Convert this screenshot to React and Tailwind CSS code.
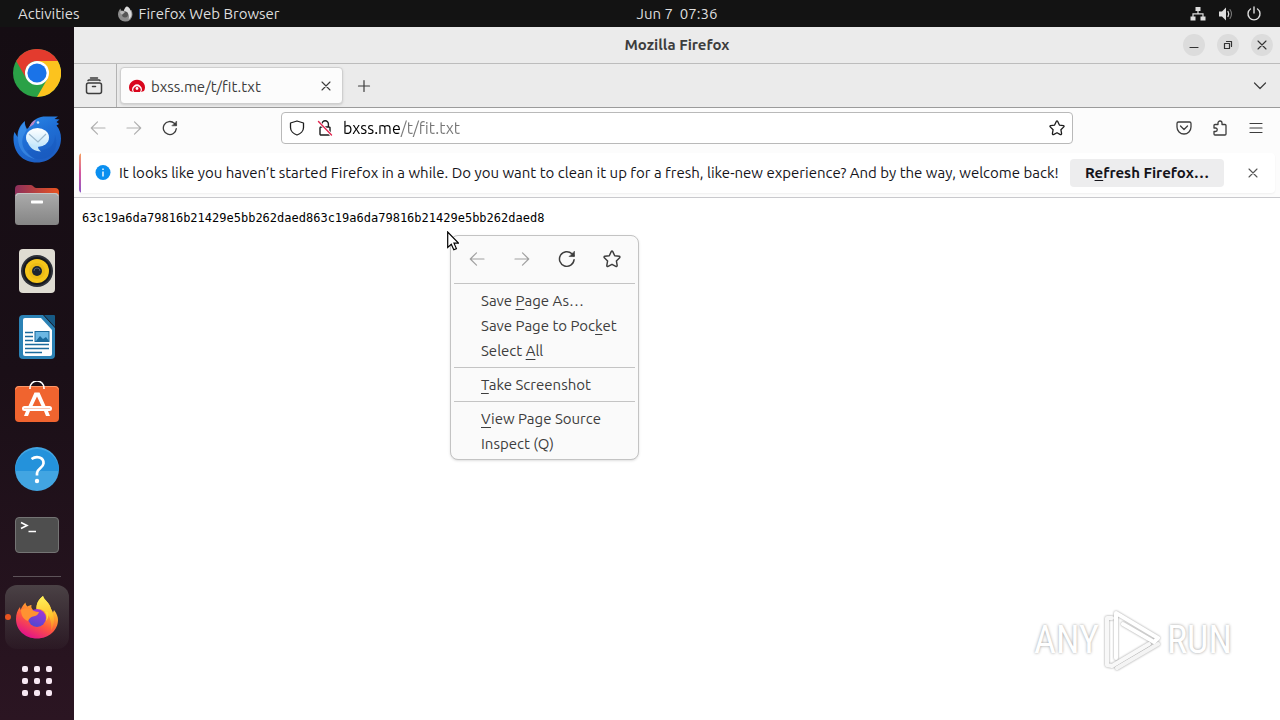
import React from "react";

const stroke = {
  fill: "none",
  stroke: "currentColor",
  strokeLinecap: "round",
  strokeLinejoin: "round",
};

function Icon({ children, className = "size-4", viewBox = "0 0 16 16", width = 1.2 }) {
  return (
    <svg viewBox={viewBox} className={className} {...stroke} strokeWidth={width} aria-hidden="true">
      {children}
    </svg>
  );
}

const BackIcon = () => (
  <Icon><path d="M15 8H1.5M7.5 1.8 1.3 8l6.2 6.2" /></Icon>
);
const ForwardIcon = () => (
  <Icon><path d="M1 8h13.5M8.5 1.8 14.7 8l-6.2 6.2" /></Icon>
);
const ReloadIcon = ({ className }) => (
  <Icon className={className} width={1.3}>
    <path d="M14.3 8.6A6.5 6.5 0 1 1 12.4 3.4L14 5" />
    <path d="M14.6 1.4v4.4h-4.4z" fill="currentColor" strokeWidth="0.6" />
  </Icon>
);
const StarIcon = ({ className }) => (
  <Icon className={className} width={1.3}>
    <path d="M8 .9c.3 0 .5.2.7.5l1.7 3.7 4 .5c.7.1.9.8.4 1.3l-2.9 2.8.7 4c.1.7-.6 1.2-1.2.9L8 12.7l-3.5 1.9c-.6.3-1.2-.2-1.1-.9l.7-4L1.2 6.9c-.5-.5-.2-1.2.4-1.3l4-.5 1.7-3.7c.2-.3.4-.5.7-.5z" />
  </Icon>
);
const CloseIcon = ({ className = "size-3" }) => (
  <Icon className={className} viewBox="0 0 12 12" width={1.1}>
    <path d="m2 2 8 8M10 2l-8 8" />
  </Icon>
);

function ChromeLogo() {
  return (
    <svg viewBox="0 0 48 48" className="size-12" aria-hidden="true">
      <circle cx="24" cy="24" r="24" fill="#2aa147" />
      <path d="M24 12h20.800A24 24 0 0 1 24 48l10.400-18z" fill="#fcc31e" />
      <path d="M3.200 12A24 24 0 0 1 44.800 12H24A12 12 0 0 0 13.600 30z" fill="#e33b2e" />
      <circle cx="24" cy="24" r="12" fill="#fff" />
      <circle cx="24" cy="24" r="9.600" fill="#1a73e8" />
    </svg>
  );
}

function ThunderbirdLogo() {
  return (
    <svg viewBox="0 0 48 48" className="size-12" aria-hidden="true">
      <defs>
        <linearGradient id="tb-body" x1="0" y1="0" x2="0.500" y2="1">
          <stop offset="0" stopColor="#2c8ceb" />
          <stop offset="0.500" stopColor="#1f6fd6" />
          <stop offset="1" stopColor="#1d5fc4" />
        </linearGradient>
        <linearGradient id="tb-mail" x1="0" y1="0" x2="0" y2="1">
          <stop offset="0" stopColor="#ffffff" />
          <stop offset="1" stopColor="#c3e6fb" />
        </linearGradient>
      </defs>
      <path d="M17 11C20 4 26 1.500 33 1.500h12l-3.500 2.500 5 .5-3 2.500 2.500 2-2.500 1.500c3 3.500 4.500 8 4.500 13C48 37 37 47.500 24 47.500 10 47.500 0 38 .5 22c.2-2 .5-4 1-5l3 5c0-7 2.500-12 7.500-16-.5 3 .5 5 2 8z" fill="url(#tb-body)" />
      <path d="M11.500 7C7 12 5 16 5 23c0 11 7 19 17 21C13 39 8 32 9.500 24c.5-4 3-6 4-9-.5-3-2.500-4-2-8z" fill="#4a9bf0" opacity=".5" />
      <path d="M27 35c10 0 15-6 15-15 4 11-1 23-14 24-6 1-12-3-14-9z" fill="#1553b6" opacity=".35" />
      <ellipse cx="24.500" cy="22.500" rx="11.500" ry="9.500" fill="url(#tb-mail)" />
      <path d="M15 28c2 5 6 8 13 8.500-2-1.500-3-3-3-5z" fill="#c3e6fb" />
      <path d="m16 19 9 8 8-8" fill="none" stroke="#9db9cd" strokeWidth="1.200" />
      <circle cx="25" cy="7.500" r="1.300" fill="#cfe4fb" />
      <path d="M16 12.500c1.500-4 4-7 7-7.500l-2.500 4.500z" fill="#bd87c8" />
    </svg>
  );
}

function FilesLogo() {
  return (
    <svg viewBox="0 0 44 40" className="h-10 w-11" aria-hidden="true">
      <defs>
        <linearGradient id="fi-back"><stop stopColor="#8c2f5c" /><stop offset="1" stopColor="#e95420" /></linearGradient>
        <linearGradient id="fi-front" x1="0" y1="0" x2="0" y2="1"><stop stopColor="#ababab" /><stop offset="1" stopColor="#858585" /></linearGradient>
      </defs>
      <path d="M0 4a4 4 0 0 1 4-4h12c2 0 3 3 5 3h19a4 4 0 0 1 4 4v10H0z" fill="url(#fi-back)" />
      <rect y="8" width="44" height="32" rx="3.500" fill="url(#fi-front)" />
      <path d="M1 11a3 3 0 0 1 3-2.500h36a3 3 0 0 1 3 2.500" fill="none" stroke="#c6c6c6" strokeWidth="1" />
      <rect x="16" y="15.500" width="12" height="3" rx=".7" fill="#fff" />
    </svg>
  );
}

function RhythmboxLogo() {
  return (
    <svg viewBox="0 0 36 44" className="h-11 w-9" aria-hidden="true">
      <rect width="36" height="44" rx="4" fill="#dfdcd2" />
      <circle cx="18" cy="22" r="16" fill="#2d3038" />
      <circle cx="18" cy="22" r="14" fill="#17181c" />
      <circle cx="18" cy="22" r="12" fill="#f6c51a" />
      <circle cx="18" cy="22" r="8" fill="#d9a90f" opacity=".35" />
      <circle cx="18" cy="22" r="5" fill="#1d2531" />
      <path d="M15 22a3 3 0 0 1 6 0" stroke="#52606e" fill="none" />
    </svg>
  );
}

function WriterLogo() {
  return (
    <svg viewBox="0 0 36 44" className="h-11 w-9" aria-hidden="true">
      <path d="M4 0h20l12 13v27a4 4 0 0 1-4 4H4a4 4 0 0 1-4-4V4a4 4 0 0 1 4-4z" fill="#2b82b5" />
      <path d="M25 0h10a1 1 0 0 1 1 1v11z" fill="#175a85" />
      <path d="M6 3h16l11 12v24a2 2 0 0 1-2 2H6a2 2 0 0 1-2-2V5a2 2 0 0 1 2-2z" fill="#fff" />
      <path d="M6 17.500h8M6 21.500h8M6 25.500h8M6 29.500h24M6 33.500h24M6 37.500h17" stroke="#1b6b9d" strokeWidth="1.700" />
      <rect x="16" y="16.500" width="14" height="10" fill="#6bb7e3" stroke="#1b6b9d" />
      <path d="m17 26 4-5 3 3 3-2 3 4z" fill="#1b6b9d" />
    </svg>
  );
}

function SoftwareLogo() {
  return (
    <svg viewBox="0 0 44 44" className="size-11" aria-hidden="true">
      <rect y="5" width="44" height="36" rx="4" fill="#f0642f" />
      <path d="M.5 8.500A3.500 3.500 0 0 1 4 5.500h36a3.500 3.500 0 0 1 3.500 3" fill="none" stroke="#fb9869" />
      <path d="M15 8V7a7 7 0 0 1 14 0v1" fill="none" stroke="#fff" strokeWidth="1.600" />
      <path d="M19.500 11.500h5l6 13.500h4a1.500 1.500 0 0 1 0 5H33l2 5h-4l-2-5H15l-2 5H9l2-5h-1.500a1.500 1.500 0 0 1 0-5h4zm2.500 4L17.500 25h9z" fill="#fff" />
      <path d="M9 27.500h26" stroke="#f9c8b4" />
    </svg>
  );
}

function HelpLogo() {
  return (
    <svg viewBox="0 0 44 44" className="size-11" aria-hidden="true">
      <circle cx="22" cy="22" r="22" fill="#42a5e2" />
      <path d="M0 24a22 22 0 1 1 44 0z" fill="#2492db" />
      <path d="M16.500 12c5-3.500 12.500-2 12 4.500-.3 4.500-6.500 5-6.500 9.500v2.500" fill="none" stroke="#fff" strokeWidth="2.700" />
      <circle cx="22" cy="34" r="2.200" fill="#fff" />
    </svg>
  );
}

function TerminalLogo() {
  return (
    <svg viewBox="0 0 44 36" className="h-9 w-11" aria-hidden="true">
      <rect x=".5" y=".5" width="43" height="35" rx="3.500" fill="#4e4e4e" stroke="#747474" />
      <path d="m6 5.500 6 3-6 3M13.500 14.500h7.500" fill="none" stroke="#fff" strokeWidth="1.600" />
    </svg>
  );
}

function FirefoxLogo() {
  return (
    <svg viewBox="0 0 44 44" className="size-11" aria-hidden="true">
      <defs>
        <linearGradient id="fx-outer" x1=".8" y1=".1" x2=".35" y2=".98">
          <stop stopColor="#fff44f" />
          <stop offset=".3" stopColor="#ffa52c" />
          <stop offset=".6" stopColor="#ff5a3c" />
          <stop offset="1" stopColor="#e31587" />
        </linearGradient>
        <linearGradient id="fx-flame" x1=".4" y1="0" x2=".5" y2="1">
          <stop stopColor="#fff15a" /><stop offset=".6" stopColor="#ffc42c" /><stop offset="1" stopColor="#ff7a2c" />
        </linearGradient>
        <linearGradient id="fx-globe" x1=".7" y1="0" x2=".3" y2="1">
          <stop stopColor="#a634d8" /><stop offset="1" stopColor="#4b49cf" />
        </linearGradient>
      </defs>
      <path d="M28 1c1 4 7 7 8 13 1 1 1.500 2 1.800 4l1.200-3c3 4 4 7 4 10 0 10-9 18.500-21 18.500S1 35 1 24c0-5 1.500-9 4-12l.5 3C7 12 8.500 9 10.500 7.500c0 2 1 3 2 4 2-1 3-1.500 4-1.500-.5 2 0 3.500 1.500 5h3.500C21 8 24 4 28 1z" fill="url(#fx-outer)" />
      <path d="M28 1c1 4 7 7 8 13 4 7 4 15 0 22 1-9-1-16-7-20-2-2-5-2-7.500-1C21 8 24 4 28 1z" fill="url(#fx-flame)" />
      <circle cx="22" cy="23" r="9" fill="url(#fx-globe)" />
      <path d="M6 15c3-2 6-2 9-1 3 1 5 3 9 3-1 3-3 4-6 4.500-2 .5-4 2-5 4.500-5-2-7-6-7-11z" fill="#ff9232" />
      <path d="M30 17c2 3 2 6 1 9 2-2 3-5 2-9z" fill="#ffd83b" />
    </svg>
  );
}

const dockApps = [
  ["Google Chrome", ChromeLogo],
  ["Thunderbird Mail", ThunderbirdLogo],
  ["Files", FilesLogo],
  ["Rhythmbox", RhythmboxLogo],
  ["LibreOffice Writer", WriterLogo],
  ["Ubuntu Software", SoftwareLogo],
  ["Help", HelpLogo],
  ["Terminal", TerminalLogo],
];

function TopBar() {
  return (
    <header className="grid h-[27px] shrink-0 grid-cols-[1fr_auto_1fr] items-center bg-[#131313] pl-[74px] text-[15px] text-[#dedede]">
      <div className="-ml-[74px] flex items-center">
        <button className="pl-[18px]">Activities</button>
        <button className="ml-[37px] flex items-center gap-[6px]">
          <svg viewBox="0 0 16 16" className="size-4" aria-hidden="true">
            <path d="M10 .5c2 1 3 2 3.500 4l1-.5c.6 1.500 1 3 1 4.500A7 7 0 0 1 8 15.500 7 7 0 0 1 1 8.500C1 6 2 4 3.500 2.500L4 4.500l3 .3C7.500 2.500 8.500 1 10 .5z" fill="#8c8c8c" />
            <path d="M10 .5c2 1 3 2 3.500 4 2 4 1 7-2 9 1.500-4 0-7-4.500-8.700C7.500 2.500 8.500 1 10 .5z" fill="#dcdcdc" />
            <circle cx="8" cy="8.500" r="3" fill="#555" />
            <path d="M3 5.500c2-1 3-.5 5 .5L5.500 8.500C4 8.500 3 7 3 5.500z" fill="#b9b9b9" />
          </svg>
          Firefox Web Browser
        </button>
      </div>
      <button className="whitespace-pre">Jun 7  07:36</button>
      <button className="flex items-center gap-3 justify-self-end pr-[18px]" aria-label="System menu">
        <svg viewBox="0 0 16 16" className="size-4" fill="currentColor" aria-hidden="true">
          <path d="M5.500 1h5v4H8.600v2.200h5V10.500H15.500v4h-5v-4h1.900V8.400H3.600v2.100H5.500v4h-5v-4h1.900V7.200h5V5H5.500z" />
        </svg>
        <svg viewBox="0 0 16 16" className="size-4" aria-hidden="true">
          <path d="M1 5.500h3L8 1.500v13l-4-4H1z" fill="currentColor" />
          <path d="M10 5.500q1.500 2.500 0 5" {...stroke} strokeWidth="1.300" />
          <path d="M12 3.500q3 4.500 0 9" {...stroke} stroke="#777" strokeWidth="1.100" />
        </svg>
        <Icon width={1.4}><path d="M4.500 3a6 6 0 1 0 7 0M8 1v6" /></Icon>
      </button>
    </header>
  );
}

function Dock() {
  return (
    <nav aria-label="Dock" className="flex w-[74px] shrink-0 flex-col items-center bg-linear-to-b from-[#150d13] via-[#1a0f17] to-[#2b1522] pt-[13px]">
      {dockApps.map(([name, Logo]) => (
        <button key={name} aria-label={name} className="flex h-[66px] w-16 items-center justify-center">
          <Logo />
        </button>
      ))}
      <hr className="mt-2 w-12 border-[#5d5359]" />
      <div className="mt-2 flex w-full items-center">
        <button aria-label="Firefox" className="ml-[5px] flex size-16 items-center rounded-xl bg-linear-to-b from-[#4a4145] to-[#3a2e35]/20">
          <span className="size-1.5 rounded-full bg-[#e95420]" />
          <span className="ml-1"><FirefoxLogo /></span>
        </button>
      </div>
      <button aria-label="Show Applications" className="flex size-16 items-center justify-center">
        <span className="grid grid-cols-3 gap-1.5">
          {Array.from({ length: 9 }, (_, i) => (
            <span key={i} className="size-1.5 rounded-[2px] bg-[#f7e8f3]" />
          ))}
        </span>
      </button>
    </nav>
  );
}

function WindowButton({ label, children }) {
  return (
    <button aria-label={label} className="flex size-[22px] items-center justify-center rounded-full bg-[#dcdcdc] text-[#333]">
      {children}
    </button>
  );
}

function TitleBar() {
  return (
    <div className="grid h-[37px] grid-cols-[1fr_auto_1fr] items-center border-b border-[#bcbcbc] bg-[#ebebeb]">
      <span />
      <h1 className="text-[15px] font-bold text-[#3d3d3d]">Mozilla Firefox</h1>
      <div className="flex gap-3 justify-self-end pr-[7px]">
        <WindowButton label="Minimize"><Icon className="size-3" viewBox="0 0 12 12"><path d="M2 8.500h8" /></Icon></WindowButton>
        <WindowButton label="Restore"><Icon className="size-3" viewBox="0 0 12 12"><path d="M2.500 4.500h5v5h-5zM4.500 2.500h5v5" /></Icon></WindowButton>
        <WindowButton label="Close"><CloseIcon /></WindowButton>
      </div>
    </div>
  );
}

function TabStrip() {
  return (
    <div className="flex h-11 items-center border-b border-[#9b9b9b] bg-[#ebebeb] text-[#3d3d3d]">
      <button aria-label="Recent browsing" className="flex h-full w-[43px] items-center justify-center border-r border-[#b3b3b3] pr-0.5">
        <Icon className="size-[18px]" viewBox="0 0 18 18" width={1.5}>
          <rect x="1.500" y="6" width="15" height="10.500" rx="2" />
          <path d="M3 3.600q.3-.6 1-.6h10q.7 0 1 .6M5.500 1h7M7.500 9.500h3" />
        </Icon>
      </button>
      <div className="ml-[3px] flex h-[37px] w-[223px] items-center rounded border border-[#cfcfcf] bg-[#fcfcfc] px-2 shadow-sm">
        <svg viewBox="0 0 16 16" className="size-4" aria-hidden="true">
          <path d="M1 13A8 7.500 0 1 1 15 13l-3 1a4.800 4.800 0 1 0-8 0z" fill="#d9061d" />
          <path d="M5 14a3.600 3.600 0 1 1 6 0z" fill="#d9061d" />
          <circle cx="8" cy="10.500" r="1.400" fill="#fff" />
        </svg>
        <span className="ml-1.5 flex-1 pt-0.5 text-[15px]">bxss.me/t/fit.txt</span>
        <button aria-label="Close tab" className="mr-0.5"><CloseIcon /></button>
      </div>
      <button aria-label="New tab" className="ml-3 flex size-[18px] items-center justify-center">
        <Icon className="size-3.5" viewBox="0 0 14 14"><path d="M7 1.500v11M1.500 7h11" /></Icon>
      </button>
      <button aria-label="List all tabs" className="mr-3 ml-auto">
        <Icon><path d="m2.500 5 5.500 5.500L13.500 5" /></Icon>
      </button>
    </div>
  );
}

function NavButton({ label, children, disabled }) {
  return (
    <button aria-label={label} disabled={disabled} className="flex size-9 shrink-0 items-center justify-center text-[#3d3d3d] disabled:text-[#b0b0b0]">
      {children}
    </button>
  );
}

function NavBar() {
  return (
    <div className="flex h-10 items-center bg-[#fcfcfc] px-1.5">
      <NavButton label="Back" disabled><BackIcon /></NavButton>
      <NavButton label="Forward" disabled><ForwardIcon /></NavButton>
      <NavButton label="Reload"><ReloadIcon /></NavButton>
      <div className="mx-[93px] flex h-8 min-w-0 flex-1 items-center rounded border border-[#b9b9b9] bg-white px-[7px] text-[#1c1c1c]">
        <Icon width={1.3}><path d="M8 1 14.500 3v4.500c0 3.500-3 6.500-6.500 7.500-3.500-1-6.500-4-6.500-7.500V3z" /></Icon>
        <svg viewBox="0 0 16 16" className="ml-3 size-4" {...stroke} strokeWidth="1.400" aria-hidden="true">
          <path d="M5 7V4a3.200 3.200 0 0 1 6.400 0v3M13 7.500V14a1 1 0 0 1-1 1H4a1 1 0 0 1-1-1V8a1 1 0 0 1 1-1h8q1 0 1 1" />
          <path d="m1.500 1.500 13 13.500" stroke="#fff" strokeWidth="3" />
          <path d="m1.500 1.500 13 13.500" stroke="#e22850" />
        </svg>
        <input
          aria-label="Address"
          defaultValue="bxss.me/t/fit.txt"
          className="ml-2.5 min-w-0 flex-1 bg-[linear-gradient(90deg,#000_57px,#777_57px)] bg-clip-text text-base text-transparent caret-black outline-none"
        />
        <button aria-label="Bookmark this page"><StarIcon /></button>
      </div>
      <NavButton label="Save to Pocket">
        <Icon width={1.3}><path d="M2.500 2h11A1.500 1.500 0 0 1 15 3.500V7A7 7 0 0 1 1 7V3.500A1.500 1.500 0 0 1 2.500 2zM4.500 6 8 9.500 11.500 6" /></Icon>
      </NavButton>
      <NavButton label="Extensions">
        <Icon width={1.3}><path d="M6 4.500V3a2 2 0 0 1 4 0v1.500h3a1 1 0 0 1 1 1V14a1 1 0 0 1-1 1H3a1 1 0 0 1-1-1v-2.500h1.500a1.700 1.700 0 0 0 0-3.500H2V5.500a1 1 0 0 1 1-1z" /></Icon>
      </NavButton>
      <NavButton label="Application menu"><Icon><path d="M2 3.500h12M2 8h12M2 12.500h12" /></Icon></NavButton>
    </div>
  );
}

function Notification() {
  return (
    <div className="border-b border-[#c9c9cd] bg-[#fcfcfc] px-[5px] pt-[5px] pb-1">
      <div role="status" className="flex h-10 items-center overflow-hidden rounded bg-white shadow-xs">
        <span className="h-full w-0.5 shrink-0 bg-linear-to-b from-[#f7a05a] via-[#d4569f] to-[#8b56c4]" />
        <svg viewBox="0 0 16 16" className="ml-3.5 size-4 shrink-0" aria-hidden="true">
          <circle cx="8" cy="7.500" r="7.500" fill="#0a8ff0" />
          <path d="M8 3.500V5M8 6.500v5" stroke="#fff" strokeWidth="1.400" />
        </svg>
        <p className="ml-2 text-[15px] whitespace-nowrap text-[#15141a]">
          It looks like you haven’t started Firefox in a while. Do you want to clean it up for a fresh, like-new experience? And by the way, welcome back!
        </p>
        <button className="ml-auto h-7 w-[154px] shrink-0 rounded bg-[#ededee] text-[15px] font-bold text-[#15141a]">
          R<u className="underline-offset-2">e</u>fresh Firefox…
        </button>
        <button aria-label="Close notification" className="mr-4 ml-[23px] text-[#555]"><CloseIcon /></button>
      </div>
    </div>
  );
}

function MenuItem({ before = "", accessKey = "", after = "" }) {
  return (
    <button role="menuitem" className="block h-[25px] w-full pl-[27px] text-left text-[15px] text-[#3d3d3d]">
      {before}
      {accessKey && <u className="underline-offset-[3px]">{accessKey}</u>}
      {after}
    </button>
  );
}

function ContextMenu() {
  return (
    <div role="menu" className="absolute top-[235px] left-[450px] w-[189px] rounded-lg border border-[#c3c3c3] bg-[#fafafa] p-[3px] shadow-sm">
      <div className="grid h-10 grid-cols-4 items-center justify-items-center text-[#3d3d3d]">
        <button aria-label="Back" disabled className="text-[#a0a0a0]"><BackIcon /></button>
        <button aria-label="Forward" disabled className="text-[#a0a0a0]"><ForwardIcon /></button>
        <button aria-label="Reload"><ReloadIcon className="size-[18px]" /></button>
        <button aria-label="Bookmark page"><StarIcon className="size-[18px]" /></button>
      </div>
      <hr className="my-1 border-[#c4c4c4]" />
      <MenuItem before="Save " accessKey="P" after="age As…" />
      <MenuItem before="Save Page to Poc" accessKey="k" after="et" />
      <MenuItem before="Select " accessKey="A" after="ll" />
      <hr className="my-1 border-[#c4c4c4]" />
      <MenuItem accessKey="T" after="ake Screenshot" />
      <hr className="my-1 border-[#c4c4c4]" />
      <MenuItem accessKey="V" after="iew Page Source" />
      <MenuItem before="Inspect (Q)" />
    </div>
  );
}

function Watermark() {
  return (
    <div className="pointer-events-none absolute right-12 bottom-12 flex items-center gap-1 font-['Roboto_Condensed','Ubuntu_Condensed','Open_Sans_Condensed','Roboto',sans-serif] text-[38px] leading-none text-white [text-shadow:0_0_3px_#999]">
      <span>ANY</span>
      <svg viewBox="0 0 60 64" className="h-16 w-[60px] drop-shadow-[0_0_1px_#999]" fill="none" stroke="#fff" strokeWidth="4" strokeLinecap="round" strokeLinejoin="round" aria-hidden="true">
        <path d="M9 10H4v47l5 1L46 36" stroke="#f8f8f8" />
        <path d="M13 50V5l42 25-4 4-31-18" />
        <path d="m14 60 41-24" stroke="#f4f4f4" />
      </svg>
      <span>RUN</span>
    </div>
  );
}

export default function App() {
  return (
    <div className="relative flex min-h-screen flex-col bg-white font-['Ubuntu','Noto_Sans',sans-serif] leading-5">
      <TopBar />
      <div className="flex flex-1">
        <Dock />
        <main className="flex min-w-0 flex-1 flex-col">
          <TitleBar />
          <TabStrip />
          <NavBar />
          <Notification />
          <pre className="px-2 py-3 font-['DejaVu_Sans_Mono',monospace] text-xs text-black">63c19a6da79816b21429e5bb262daed863c19a6da79816b21429e5bb262daed8</pre>
        </main>
      </div>
      <ContextMenu />
      <svg viewBox="0 0 12 20" className="absolute top-[231px] left-[447px] h-5 w-3" aria-hidden="true">
        <path d="M.7 1v15.500l3.600-3.300 2.500 5.600 2.600-1.200L7 12.200h4.500z" fill="#fff" stroke="#000" strokeWidth="1.200" />
      </svg>
      <Watermark />
    </div>
  );
}
